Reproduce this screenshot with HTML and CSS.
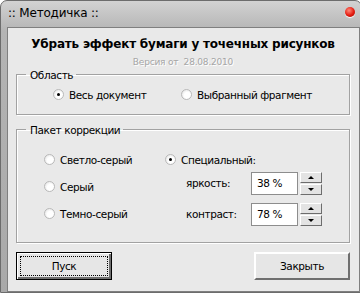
FILE: index.html
```html
<!DOCTYPE html>
<html lang="ru">
<head>
    <meta charset="UTF-8">
    <title>Методичка</title>
    <link rel="stylesheet" href="styles.css">
</head>
<body>
    <div class="window">
        <div class="titlebar">
            <span class="title">:: Методичка ::</span>
            <span class="close-dot"></span>
        </div>

        <div class="panel">
            <h1>Убрать эффект бумаги у точечных рисунков</h1>
            <div class="version">Версия от&nbsp; 28.08.2010</div>

            <fieldset class="group area">
                <legend>Область</legend>
                <div class="area-row">
                    <label class="radio"><span class="dot checked"></span>Весь документ</label>
                    <label class="radio"><span class="dot"></span>Выбранный фрагмент</label>
                </div>
            </fieldset>

            <fieldset class="group pack">
                <legend>Пакет коррекции</legend>
                <div class="pack-cols">
                    <div class="col-left">
                        <label class="radio"><span class="dot"></span>Светло-серый</label>
                        <label class="radio"><span class="dot"></span>Серый</label>
                        <label class="radio"><span class="dot"></span>Темно-серый</label>
                    </div>
                    <div class="col-right">
                        <label class="radio"><span class="dot checked"></span>Специальный:</label>
                        <div class="field-row">
                            <span class="field-label">яркость:</span>
                            <span class="num-box">38 %</span>
                            <span class="spin">
                                <span class="spin-btn"><span class="arr up"></span></span>
                                <span class="spin-btn"><span class="arr down"></span></span>
                            </span>
                        </div>
                        <div class="field-row second">
                            <span class="field-label">контраст:</span>
                            <span class="num-box">78 %</span>
                            <span class="spin">
                                <span class="spin-btn"><span class="arr up"></span></span>
                                <span class="spin-btn"><span class="arr down"></span></span>
                            </span>
                        </div>
                    </div>
                </div>
            </fieldset>

            <div class="buttons">
                <button class="btn default"><span class="focus">Пуск</span></button>
                <button class="btn">Закрыть</button>
            </div>
        </div>
    </div>
</body>
</html>
```

FILE: styles.css
```css
body {
    margin: 0;
    background: #fff;
    font-family: 'DejaVu Sans', Tahoma, sans-serif;
    font-size: 10.5px;
    color: #000;
}
.window {
    width: 353px;
    height: 291px;
    border: 1px solid #6c6c6c;
    border-radius: 7px 7px 0 0;
    background: linear-gradient(#d2d2d2, #b4b4b4 30px, #a9a9a9);
    padding: 0 1px 0 6px;
    display: flex;
    flex-direction: column;
}
.titlebar {
    height: 26px;
    display: flex;
    align-items: center;
    justify-content: space-between;
    padding: 0 5px 0 1px;
}
.title {
    font-size: 12px;
    letter-spacing: -0.2px;
    margin-top: -2px;
}
.close-dot {
    width: 10px;
    height: 10px;
    border-radius: 50%;
    background: radial-gradient(circle at 40% 35%, #ff8a7a, #e41b10 55%, #9a0d06);
    box-shadow: 0 1px 1px #fff;
    margin-top: -4px;
}
.panel {
    height: 259px;
    border: 1px solid #7f7f7f;
    background: #e9e9e9;
    padding: 8px 9px 0 8px;
}
h1 {
    margin: 0;
    font-size: 12px;
    line-height: 16px;
    text-align: center;
    letter-spacing: -0.2px;
}
.version {
    margin-top: 4px;
    font-size: 9px;
    line-height: 12px;
    text-align: center;
    color: #a6a6a6;
    text-shadow: 1px 1px 0 #fff;
    letter-spacing: -0.2px;
}
.group {
    margin: 0;
    border: 1px solid #a2a2a2;
    box-shadow: inset 1px 1px 0 #fff, 1px 1px 0 #fff;
    padding: 0;
}
.group legend {
    margin-left: 9px;
    padding: 0 3px 0 4px;
    line-height: 14px;
    letter-spacing: -0.4px;
}
.radio {
    display: flex;
    align-items: center;
    height: 14px;
    letter-spacing: -0.4px;
}
.dot {
    width: 11px;
    height: 11px;
    box-sizing: border-box;
    border-radius: 50%;
    border: 1px solid #b9b9b9;
    background: radial-gradient(circle at 60% 60%, #fff 40%, #dcdcdc);
    margin-right: 5px;
    display: flex;
    align-items: center;
    justify-content: center;
}
.dot.checked::after {
    content: "";
    width: 3px;
    height: 3px;
    border-radius: 50%;
    background: #000;
}
.area-row {
    display: flex;
    padding: 6px 0 12px 36px;
}
.area-row .radio:first-child {
    width: 128px;
}
.pack {
    margin-top: 8px;
}
.pack-cols {
    display: flex;
    padding: 16px 0 16px 27px;
}
.col-left {
    width: 121px;
    display: flex;
    flex-direction: column;
    gap: 13px;
}
.col-right {
    display: flex;
    flex-direction: column;
}
.field-row {
    display: flex;
    align-items: center;
    margin-top: 5px;
    height: 23px;
}
.field-row.second {
    margin-top: 8px;
}
.field-label {
    width: 65px;
    padding-left: 21px;
    letter-spacing: -0.4px;
}
.num-box {
    width: 47px;
    height: 23px;
    box-sizing: border-box;
    background: #fff;
    border: 1px solid #8d8d8d;
    padding: 4px 0 0 5px;
    letter-spacing: -0.4px;
}
.spin {
    margin-left: 2px;
    display: flex;
    flex-direction: column;
}
.spin-btn {
    width: 22px;
    height: 11px;
    box-sizing: border-box;
    background: #e3e3e3;
    border: 1px solid;
    border-color: #fff #6d6d6d #6d6d6d #fff;
    display: flex;
    align-items: center;
    justify-content: center;
}
.spin-btn + .spin-btn {
    margin-top: 1px;
}
.arr {
    width: 0;
    height: 0;
    border-left: 3px solid transparent;
    border-right: 3px solid transparent;
}
.arr.up {
    border-bottom: 3px solid #000;
}
.arr.down {
    border-top: 3px solid #000;
}
.buttons {
    display: flex;
    justify-content: space-between;
    margin-top: 9px;
}
.btn {
    width: 96px;
    height: 28px;
    box-sizing: border-box;
    font: inherit;
    letter-spacing: -0.4px;
    background: #e6e6e6;
    border: 2px solid;
    border-color: #fff #6f6f6f #6f6f6f #fff;
    padding: 0;
    color: #000;
}
.btn.default {
    border: 1px solid #000;
    box-shadow: inset 1px 1px 0 #fff, inset -2px -2px 0 #6f6f6f;
    padding: 3px;
}
.focus {
    display: flex;
    align-items: center;
    justify-content: center;
    height: 100%;
    box-sizing: border-box;
    border: 1px dotted #000;
}
```
